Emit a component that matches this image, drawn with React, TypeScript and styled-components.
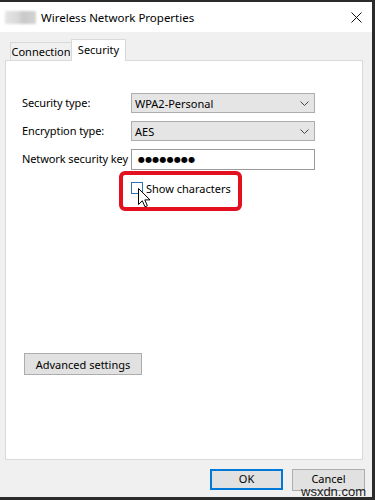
import React, { useState } from 'react';
import styled, { createGlobalStyle } from 'styled-components';

const GlobalStyle = createGlobalStyle`
	html, body {
		margin: 0;
		padding: 0;
		background: #2b2b2b;
	}
	body {
		font-family: 'Noto Sans', 'Segoe UI', sans-serif;
		font-size: 11px;
		color: #000;
	}
	* {
		box-sizing: border-box;
	}
`;

const Window = styled.div`
	position: relative;
	width: 372px;
	height: 495px;
	margin-top: 2px;
	background: #f0f0f0;
	display: flex;
	flex-direction: column;
`;

const TitleBar = styled.div`
	height: 30px;
	flex: none;
	background: #fff;
	display: flex;
	align-items: center;
	padding: 0 10px 0 5px;
`;

const AppIcon = styled.div`
	width: 31px;
	height: 13px;
	margin-right: 5px;
	background: linear-gradient(90deg, #e6e6e6 0%, #d9d9d9 40%, #c9c9c9 60%, #d4d4d4 100%);
	filter: blur(0.8px);
`;

const Title = styled.div`
	flex: 1;
	font-size: 11.5px;
	line-height: 1;
	padding-top: 1px;
`;

const Body = styled.div`
	flex: 1;
	display: flex;
	flex-direction: column;
	padding: 7px 9px 6px 5px;
`;

const Tabs = styled.div`
	display: flex;
	align-items: flex-end;
	height: 21px;
	padding-left: 5px;
	position: relative;
	z-index: 1;
`;

const Tab = styled.div<{ $active?: boolean; $w: number }>`
	width: ${(p) => p.$w}px;
	height: ${(p) => (p.$active ? 22 : 18)}px;
	margin-bottom: ${(p) => (p.$active ? -1 : 0)}px;
	margin-left: ${(p) => (p.$active ? -1 : 0)}px;
	background: ${(p) => (p.$active ? '#fff' : '#f0f0f0')};
	border: 1px solid #d9d9d9;
	border-bottom: none;
	display: flex;
	align-items: center;
	justify-content: center;
	padding-bottom: ${(p) => (p.$active ? 3 : 0)}px;
	cursor: default;
`;

const Panel = styled.div`
	flex: 1;
	display: flex;
	flex-direction: column;
	background: #fff;
	border: 1px solid #d9d9d9;
	padding: 32px 0 84px 16px;
`;

const Form = styled.div`
	display: grid;
	grid-template-columns: 109px 184px;
	row-gap: 8px;
	align-items: center;
`;

const Label = styled.div`
	line-height: 1;
	padding-bottom: 2px;
	white-space: nowrap;
	letter-spacing: -0.1px;
`;

const Combo = styled.div`
	height: 20px;
	background: #e5e5e5;
	border: 1px solid #adadad;
	display: flex;
	align-items: center;
	justify-content: space-between;
	padding: 0 5px 0 3px;
`;

const TextBox = styled.div`
	height: 21px;
	background: #fff;
	border: 1px solid #9a9a9a;
	display: flex;
	align-items: center;
	padding: 0 0 0 6px;
	font-family: 'DejaVu Sans', sans-serif;
	font-size: 8px;
	letter-spacing: 0.2px;
`;

const CheckRow = styled.label`
	grid-column: 2;
	position: relative;
	display: flex;
	align-items: center;
	gap: 3px;
	margin-top: 3px;
	height: 14px;
`;

const CheckBox = styled.span<{ $checked: boolean }>`
	width: 12px;
	height: 12px;
	border: 1px solid #2a72b5;
	background: #fff;
	display: flex;
	align-items: center;
	justify-content: center;
	font-size: 10px;
	line-height: 1;
`;

const Highlight = styled.div`
	position: absolute;
	left: -12px;
	top: -10px;
	width: 123px;
	height: 40px;
	border: 4px solid #e3101f;
	border-radius: 6px;
	pointer-events: none;
`;

const Cursor = styled.svg`
	position: absolute;
	left: 7px;
	top: 7px;
	pointer-events: none;
`;

const Button = styled.button<{ $primary?: boolean }>`
	height: ${(p) => (p.$primary ? 21 : 22)}px;
	padding: 0;
	font-family: inherit;
	font-size: 11px;
	color: #000;
	background: #e1e1e1;
	border: ${(p) => (p.$primary ? '2px solid #0078d7' : '1px solid #adadad')};
	border-radius: 0;
`;

const AdvancedButton = styled(Button)`
	margin-top: auto;
	margin-left: 2px;
	width: 118px;
`;

const Footer = styled.div`
	display: flex;
	justify-content: flex-end;
	gap: 9px;
	padding-top: 9px;
	margin-right: -2px;
	${Button} {
		width: 73px;
		padding-bottom: 3px;
	}
`;

const Watermark = styled.div`
	position: absolute;
	left: 301px;
	top: 482px;
	font-family: 'Liberation Sans', Arial, sans-serif;
	font-size: 13px;
	color: #1c1c1c;
	pointer-events: none;
`;

const Chevron = () => (
	<svg width="9" height="5" viewBox="0 0 9 5">
		<path d="M0.5 0.5 L4.5 4.5 L8.5 0.5" fill="none" stroke="#444" strokeWidth="1" />
	</svg>
);

const CloseIcon = () => (
	<svg width="11" height="11" viewBox="0 0 11 11">
		<path d="M0.5 0.5 L10.5 10.5 M10.5 0.5 L0.5 10.5" stroke="#111" strokeWidth="1" />
	</svg>
);

export default function App() {
	const [showChars, setShowChars] = useState(false);

	return (
		<>
			<GlobalStyle />
			<Window>
				<TitleBar>
					<AppIcon />
					<Title>Wireless Network Properties</Title>
					<CloseIcon />
				</TitleBar>
				<Body>
					<Tabs>
						<Tab $w={62}>Connection</Tab>
						<Tab $w={55} $active>
							Security
						</Tab>
					</Tabs>
					<Panel>
						<Form>
							<Label>Security type:</Label>
							<Combo>
								<span>WPA2-Personal</span>
								<Chevron />
							</Combo>
							<Label>Encryption type:</Label>
							<Combo>
								<span>AES</span>
								<Chevron />
							</Combo>
							<Label>Network security key</Label>
							<TextBox>{showChars ? 'password' : '●●●●●●●●'}</TextBox>
							<CheckRow onClick={() => setShowChars(!showChars)}>
								<CheckBox $checked={showChars}>{showChars ? '✓' : ''}</CheckBox>
								<span>Show characters</span>
								<Highlight />
								<Cursor width="14" height="20" viewBox="0 0 14 20">
									<path
										d="M0.5 0.5 L0.5 16.5 L4.3 12.8 L7 18.8 L9.4 17.8 L6.8 11.9 L12 11.9 Z"
										fill="#fff"
										stroke="#000"
										strokeWidth="1"
										strokeLinejoin="round"
									/>
								</Cursor>
							</CheckRow>
						</Form>
						<AdvancedButton>Advanced settings</AdvancedButton>
					</Panel>
					<Footer>
						<Button $primary>OK</Button>
						<Button>Cancel</Button>
					</Footer>
				</Body>
				<Watermark>wsxdn.com</Watermark>
			</Window>
		</>
	);
}
